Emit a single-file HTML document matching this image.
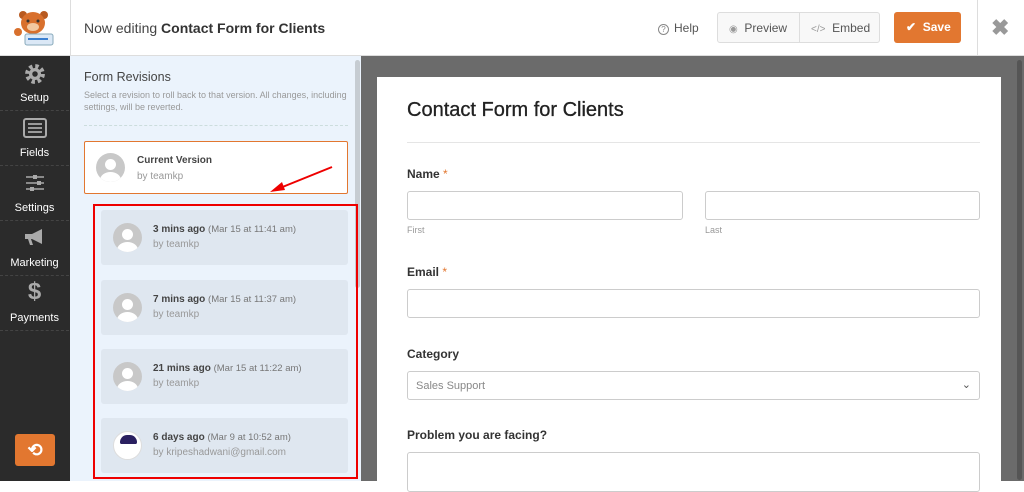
<!DOCTYPE html>
<html><head><meta charset="utf-8"><style>
*{box-sizing:border-box;margin:0;padding:0}
body{width:1024px;height:481px;overflow:hidden;font-family:"Liberation Sans",sans-serif;background:#fff;position:relative}
.abs{position:absolute}
.hdr{left:0;top:0;width:1024px;height:56px;background:#fff;border-bottom:1px solid #ddd}
.nav{left:0;top:56px;width:70px;height:425px;background:#2b2b2b}
.nav .it{position:absolute;left:0;width:69px;height:55px;border-bottom:1px dashed #444;color:#fff;font-size:11px;text-align:center}
.nav .it span{position:absolute;left:0;right:0;bottom:6px}
.panel{left:70px;top:56px;width:291px;height:425px;background:#ebf3fc}
.gray{left:361px;top:56px;width:663px;height:425px;background:#6b6b6b}
.card{left:377px;top:77px;width:624px;height:404px;background:#fff}
.rev{position:absolute;left:101px;width:247px;height:55px;background:#dfe7f0;border-radius:3px}
.av{position:absolute;left:12px;top:13px;width:29px;height:29px;border-radius:50%;background:#c8c8c8;overflow:hidden}
.av:before{content:"";position:absolute;left:9px;top:6px;width:11px;height:11px;border-radius:50%;background:#fff}
.av:after{content:"";position:absolute;left:4px;top:19px;width:21px;height:16px;border-radius:50%;background:#fff}
.rt{position:absolute;left:52px;top:14px;font-size:10px;color:#444;white-space:nowrap}
.rt b{color:#444}
.rt small{color:#777;font-size:9.5px}
.rb{position:absolute;left:52px;top:29px;font-size:10px;color:#999}
.lbl{position:absolute;font-size:12px;color:#333;font-weight:bold}
.lbl i{color:#e27730;font-style:normal;font-weight:normal}
.inp{position:absolute;height:29px;border:1px solid #ccc;border-radius:3px;background:#fff}
.sub{position:absolute;font-size:9px;color:#999}
</style></head><body>
<div class="abs hdr"></div>
<div class="abs" style="left:70px;top:0;width:1px;height:56px;background:#ddd"></div>
<div class="abs" style="left:977px;top:0;width:1px;height:56px;background:#ddd"></div>
<svg class="abs" style="left:12px;top:8px" width="46" height="38" viewBox="0 0 46 38">
<circle cx="11" cy="7" r="4" fill="#b85a20"/><circle cx="32" cy="7" r="4" fill="#b85a20"/>
<ellipse cx="21" cy="15" rx="12" ry="11" fill="#d8702d"/>
<ellipse cx="21" cy="19" rx="6" ry="4" fill="#f2c8a0"/>
<circle cx="16" cy="13" r="1.5" fill="#333"/><circle cx="26" cy="13" r="1.5" fill="#333"/>
<rect x="13" y="26" width="28" height="11" rx="2" fill="#dbe8f6" stroke="#8ab" stroke-width="1"/>
<rect x="16" y="30" width="20" height="2" fill="#3a7fd0"/>
<ellipse cx="6" cy="24" rx="4" ry="4" fill="#d8702d"/>
</svg>
<div class="abs" style="left:84px;top:20px;font-size:14px;color:#444">Now editing <b style="color:#333">Contact Form for Clients</b></div>
<div class="abs" style="left:658px;top:21px;font-size:12px;color:#555"><span style="display:inline-block;width:11px;height:11px;border:1px solid #888;border-radius:50%;font-size:8px;text-align:center;line-height:10px;color:#888;margin-right:5px">?</span>Help</div>
<div class="abs" style="left:717px;top:12px;width:163px;height:31px;border:1px solid #ddd;border-radius:3px;background:#f8f8f8"></div>
<div class="abs" style="left:799px;top:13px;width:1px;height:29px;background:#ddd"></div>
<div class="abs" style="left:729px;top:21px;font-size:12px;color:#555"><span style="color:#999;font-size:10px">◉</span>&nbsp; Preview</div>
<div class="abs" style="left:811px;top:21px;font-size:12px;color:#555"><span style="color:#999;font-size:10px">&lt;/&gt;</span>&nbsp; Embed</div>
<div class="abs" style="left:894px;top:12px;width:67px;height:31px;background:#e27730;border-radius:3px;color:#fff;font-size:12px;font-weight:bold;line-height:31px;padding-left:12px">✔&nbsp; Save</div>
<div class="abs" style="left:991px;top:15px;font-size:22px;color:#999;font-weight:bold">✖</div>

<div class="abs nav">
<div class="it" style="top:0"><svg style="position:absolute;left:24px;top:7px" width="22" height="22" viewBox="0 0 20 20"><circle cx="10" cy="10" r="7" fill="none" stroke="#aaa" stroke-width="4" stroke-dasharray="3 2.5"/><circle cx="10" cy="10" r="5.5" fill="#aaa"/><circle cx="10" cy="10" r="2.5" fill="#2b2b2b"/></svg><span>Setup</span></div>
<div class="it" style="top:55px"><svg style="position:absolute;left:23px;top:7px" width="24" height="20"><rect x="1" y="1" width="22" height="18" rx="2" fill="none" stroke="#aaa" stroke-width="2"/><path d="M5 6h14M5 10h14M5 14h14" stroke="#aaa" stroke-width="1.8"/></svg><span>Fields</span></div>
<div class="it" style="top:110px"><svg style="position:absolute;left:25px;top:7px" width="20" height="20"><path d="M1 4h18M1 10h18M1 16h18" stroke="#aaa" stroke-width="1.5"/><rect x="8" y="2" width="4" height="4" fill="#aaa"/><rect x="12" y="8" width="4" height="4" fill="#aaa"/><rect x="5" y="14" width="4" height="4" fill="#aaa"/></svg><span>Settings</span></div>
<div class="it" style="top:165px"><svg style="position:absolute;left:23px;top:6px" width="24" height="20"><path d="M2 7h7l10-5v15L9 12H2z" fill="#aaa"/><path d="M5 12l2 6h3l-2-6" fill="#aaa"/></svg><span>Marketing</span></div>
<div class="it" style="top:220px"><div style="position:absolute;left:0;right:0;top:2px;font-size:24px;color:#aaa;font-weight:bold">$</div><span>Payments</span></div>
<div class="abs" style="left:15px;top:378px;width:40px;height:32px;background:#e27730;border-radius:3px;color:#fff;font-size:18px;text-align:center;line-height:32px;font-weight:bold">⟲</div>
</div>

<div class="abs panel">
<div class="abs" style="left:14px;top:14px;font-size:12.5px;color:#444">Form Revisions</div>
<div class="abs" style="left:14px;top:33px;width:265px;font-size:9px;line-height:12px;color:#999">Select a revision to roll back to that version. All changes, including settings, will be reverted.</div>
<div class="abs" style="left:14px;top:69px;width:264px;border-top:1px dashed #cdd"></div>
<div class="abs" style="left:14px;top:85px;width:264px;height:53px;background:#fff;border:1px solid #e27730;border-radius:2px">
<div class="av" style="left:11px;top:11px"></div>
<div class="rt" style="left:52px;top:13px"><b>Current Version</b></div><div class="rb" style="left:52px;top:29px">by teamkp</div></div>
<div class="abs" style="left:285px;top:4px;width:5px;height:228px;background:#c6ccd2;border-radius:3px"></div>
</div>
<svg class="abs" style="left:260px;top:162px" width="80" height="35"><path d="M72 5L20 26" stroke="#e00" stroke-width="2"/><path d="M10 30l12-10 3 8z" fill="#e00"/></svg>

<div class="rev" style="top:210px"><div class="av"></div><div class="rt"><b>3 mins ago</b> <small>(Mar 15 at 11:41 am)</small></div><div class="rb">by teamkp</div></div>
<div class="rev" style="top:280px"><div class="av"></div><div class="rt"><b>7 mins ago</b> <small>(Mar 15 at 11:37 am)</small></div><div class="rb">by teamkp</div></div>
<div class="rev" style="top:349px"><div class="av"></div><div class="rt"><b>21 mins ago</b> <small>(Mar 15 at 11:22 am)</small></div><div class="rb">by teamkp</div></div>
<div class="rev" style="top:418px"><div class="av" style="background:#fff;border:1px solid #ddd"><div style="position:absolute;left:6px;top:3px;width:17px;height:9px;background:#2a2060;border-radius:8px 8px 2px 2px"></div></div><div class="rt"><b>6 days ago</b> <small>(Mar 9 at 10:52 am)</small></div><div class="rb">by kripeshadwani@gmail.com</div></div>
<div class="abs" style="left:93px;top:204px;width:265px;height:275px;border:2px solid #e00"></div>

<div class="abs gray"></div>
<div class="abs" style="left:1017px;top:60px;width:5px;height:420px;background:#555;border-radius:3px"></div>
<div class="abs card">
<div class="abs" style="left:30px;top:22px;font-size:20px;color:#222;-webkit-text-stroke:0.3px #222">Contact Form for Clients</div>
<div class="abs" style="left:30px;top:65px;width:573px;height:1px;background:#e5e5e5"></div>
<div class="lbl" style="left:30px;top:90px">Name <i>*</i></div>
<div class="inp" style="left:30px;top:114px;width:276px"></div>
<div class="inp" style="left:328px;top:114px;width:275px"></div>
<div class="sub" style="left:30px;top:148px">First</div>
<div class="sub" style="left:328px;top:148px">Last</div>
<div class="lbl" style="left:30px;top:188px">Email <i>*</i></div>
<div class="inp" style="left:30px;top:212px;width:573px"></div>
<div class="lbl" style="left:30px;top:270px">Category</div>
<div class="inp" style="left:30px;top:294px;width:573px;font-size:11px;color:#888;padding:8px 8px">Sales Support<span style="position:absolute;right:8px;top:6px;color:#555">⌄</span></div>
<div class="lbl" style="left:30px;top:351px">Problem you are facing?</div>
<div class="inp" style="left:30px;top:375px;width:573px;height:40px"></div>
</div>
</body></html>
